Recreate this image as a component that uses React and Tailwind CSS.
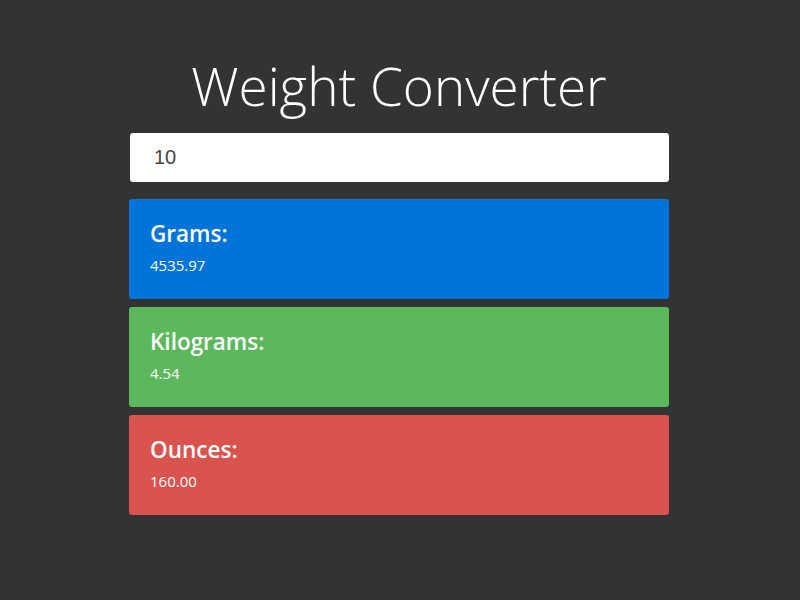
export default function App() {
  const results = [
    { label: "Grams:", value: "4535.97", bg: "bg-[#0074d9]" },
    { label: "Kilograms:", value: "4.54", bg: "bg-[#5cb85c]" },
    { label: "Ounces:", value: "160.00", bg: "bg-[#d9534f]" },
  ];

  return (
    <div className="min-h-[600px] bg-[#333333] pt-[50px] font-['Open_Sans',sans-serif]">
      <div className="mx-auto w-[542px] pr-[2px]">
        <h1 className="text-center text-[53px] font-light leading-[72px] text-white">
          Weight Converter
        </h1>

        <input
          type="text"
          defaultValue="10"
          className="mt-[11px] ml-px block h-[49px] w-[539px] rounded-[3px] bg-white px-6 font-['Liberation_Sans',sans-serif] text-[20px] text-[#444] outline-none"
        />

        <div className="mt-[17px] flex flex-col gap-[8px]">
          {results.map((r) => (
            <div key={r.label} className={`h-[100px] rounded-[3px] px-[21px] pt-[20px] text-white ${r.bg}`}>
              <h4 className="text-[22.5px] font-semibold leading-[30px]">{r.label}</h4>
              <p className="mt-[6px] text-[15px] leading-[20px]">{r.value}</p>
            </div>
          ))}
        </div>
      </div>
    </div>
  );
}
